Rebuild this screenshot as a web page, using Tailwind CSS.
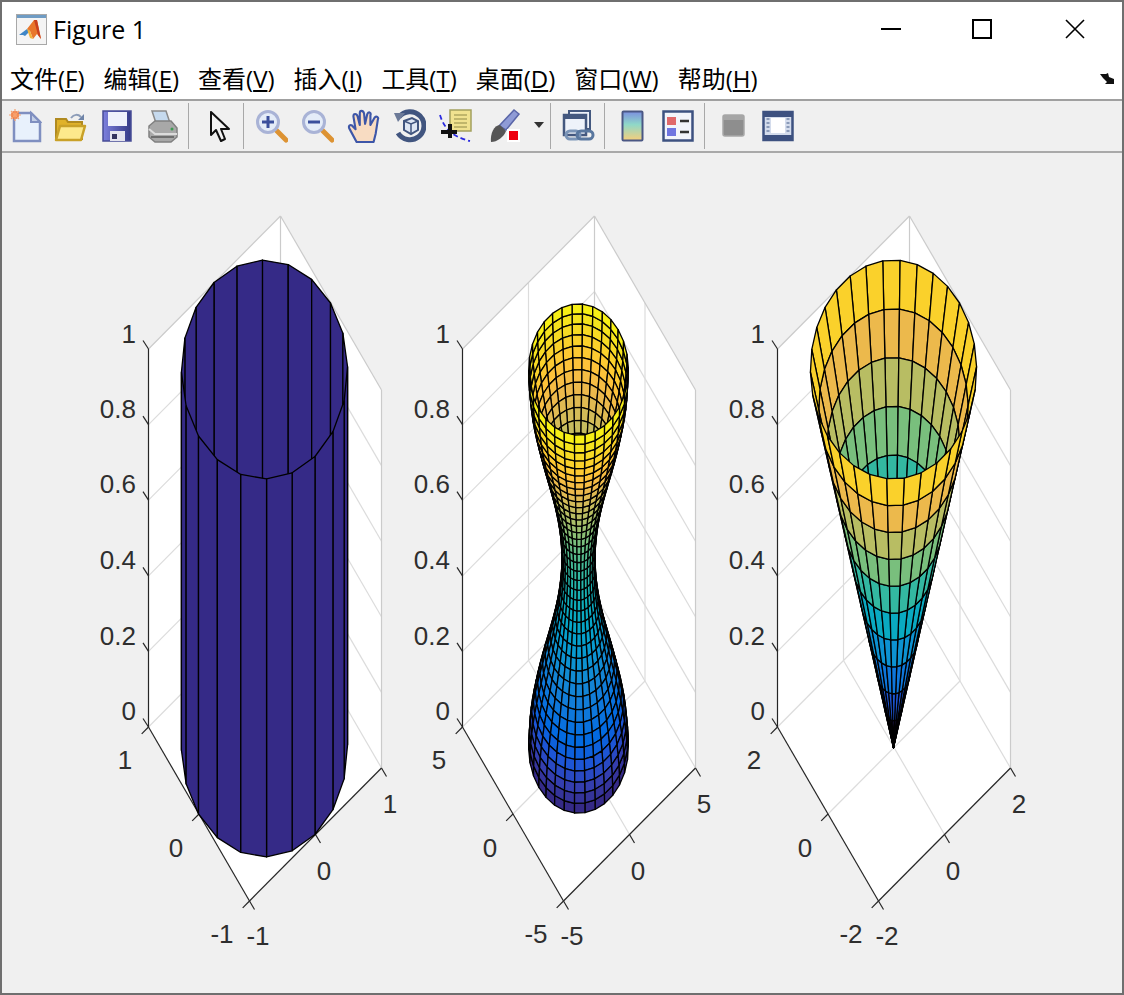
<!DOCTYPE html>
<html lang="en">

<head>
	<meta charset="UTF-8" />
	<title>Figure 1</title>
	<script src="https://cdn.jsdelivr.net/npm/@tailwindcss/browser@4"></script>
</head>

<body class="bg-[#f0f0f0] overflow-hidden">

	<div class="w-[1124px] h-[995px] flex flex-col border-2 border-[#6f6f6f] bg-[#f0f0f0] font-['Open_Sans','Noto_Sans_CJK_SC',sans-serif] text-black">

		<!-- title bar -->
		<div class="h-[56px] bg-white flex items-center shrink-0 pl-[14px] pb-[2px]">
			<svg class="w-[31px] h-[31px] shrink-0" viewBox="0 0 31 31">
				<rect x="0.5" y="0.5" width="30" height="30" fill="#f4f4f4" stroke="#a8a8a8" />
				<rect x="1" y="1" width="29" height="3" fill="#6f9cc4" />
				<polygon points="3,21 11,15 14,17 9,22 7,21" fill="#3f86c6" />
				<polygon points="11,15 18,6 21,6 25,25 21,20 17,25 14,17" fill="#e8762b" />
				<polygon points="18,6 21,6 25,25 22,21" fill="#c9401f" />
				<polygon points="11,15 14,17 17,25 14,24" fill="#f2b23c" />
			</svg>
			<span class="ml-[6px] text-[25px] leading-none">Figure 1</span>
			<div class="ml-auto flex items-center">
				<svg class="w-[20px] h-[20px] mr-[71px]" viewBox="0 0 20 20"><rect x="0" y="9" width="20" height="2" fill="#000" /></svg>
				<svg class="w-[20px] h-[20px] mr-[73px]" viewBox="0 0 20 20"><rect x="1" y="1" width="18" height="18" fill="none" stroke="#000" stroke-width="2" /></svg>
				<svg class="w-[20px] h-[20px] mr-[37px]" viewBox="0 0 20 20"><path d="M1 1L19 19M19 1L1 19" stroke="#000" stroke-width="1.6" fill="none" /></svg>
			</div>
		</div>

		<!-- menu bar -->
		<div class="h-[43px] bg-white flex items-center shrink-0 pl-[8px] gap-[19px] relative text-[24px] leading-none border-b-2 border-[#a0a0a0]">
			<span>文件(<u>F</u>)</span>
			<span>编辑(<u>E</u>)</span>
			<span>查看(<u>V</u>)</span>
			<span>插入(<u>I</u>)</span>
			<span>工具(<u>T</u>)</span>
			<span>桌面(<u>D</u>)</span>
			<span>窗口(<u>W</u>)</span>
			<span>帮助(<u>H</u>)</span>
			<svg class="absolute right-[7px] top-[15px] w-[15px] h-[12px]" viewBox="0 0 15 12">
				<path d="M0 1H6L8 0L9 4L14 6V11H5L7 9L3 5Z" fill="#111" />
			</svg>
		</div>

		<!-- toolbar -->
		<div class="h-[52px] flex items-center shrink-0 border-b-2 border-[#a9a9a9] pl-[7px] [&_svg]:blur-[0.5px]">
			<!-- new -->
			<svg class="w-[33px] h-[34px] shrink-0" viewBox="0 0 33 34">
				<path d="M5 4H22L31 13V32H5Z" fill="#e8f1fc" stroke="#7f8fc0" stroke-width="2.5" />
				<path d="M22 4V13H31Z" fill="#c4cfe6" stroke="#7f8fc0" stroke-width="2" />
				<circle cx="6" cy="6" r="4" fill="#f2763c" />
				<path d="M6 0V12M0 6H12M2 2L10 10M10 2L2 10" stroke="#f6a16e" stroke-width="1.2" />
			</svg>
			<!-- open -->
			<svg class="w-[33px] h-[34px] shrink-0 ml-[12px]" viewBox="0 0 33 34">
				<path d="M2 10H12L14 13H28V30H2Z" fill="#e0b22a" stroke="#b08a20" stroke-width="2" />
				<path d="M2 31L6 17H31L27 31Z" fill="#fde98c" stroke="#c9a128" stroke-width="2.5" stroke-linejoin="round" />
				<path d="M17 9C20 5 24 5 27 8" fill="none" stroke="#8c9cb8" stroke-width="2" />
				<path d="M30 5V11H24Z" fill="#6f84a8" />
			</svg>
			<!-- save -->
			<svg class="w-[33px] h-[34px] shrink-0 ml-[14px]" viewBox="0 0 33 34">
				<defs>
					<linearGradient id="disk" x1="0" y1="0" x2="1" y2="0">
						<stop offset="0" stop-color="#7d80de" />
						<stop offset="1" stop-color="#343a86" />
					</linearGradient>
				</defs>
				<path d="M2 2H30V32H2Z" fill="url(#disk)" stroke="#474c96" stroke-width="1.5" />
				<rect x="7" y="3" width="19" height="14" fill="#eef1fb" />
				<rect x="9" y="22" width="15" height="10" fill="#e4e4ee" />
				<rect x="11" y="25" width="5" height="5" fill="#33335e" />
			</svg>
			<!-- print -->
			<svg class="w-[33px] h-[34px] shrink-0 ml-[12px]" viewBox="0 0 33 34">
				<path d="M6 2H20L24 14H10Z" fill="#c6daee" stroke="#8a8a8a" stroke-width="1.5" />
				<path d="M3 17L9 12H25L31 19V28L25 33H9L3 28Z" fill="#a8a8a8" stroke="#808080" stroke-width="1.5" />
				<path d="M3 20L9 25H31" fill="none" stroke="#dcdcdc" stroke-width="2" />
				<circle cx="26" cy="20" r="1.5" fill="#3e9a52" />
				<path d="M5 28H28" stroke="#6e6e6e" stroke-width="2" />
			</svg>
			<div class="w-px h-[46px] bg-[#a8a8a8] ml-[9px] shrink-0"></div>
			<!-- pointer -->
			<svg class="w-[22px] h-[32px] shrink-0 ml-[20px] mt-[2px]" viewBox="0 0 22 32">
				<path d="M2 1V24L7 19L12 30L16 28L12 18H20Z" fill="#f3f3f3" stroke="#111" stroke-width="2" stroke-linejoin="round" />
			</svg>
			<div class="w-px h-[46px] bg-[#a8a8a8] ml-[12px] shrink-0"></div>
			<!-- zoom in -->
			<svg class="w-[33px] h-[34px] shrink-0 ml-[11px]" viewBox="0 0 33 34">
				<path d="M20 20L31 31" stroke="#dd9333" stroke-width="5" stroke-linecap="round" />
				<circle cx="13" cy="13" r="10.5" fill="#e4ecf8" stroke="#a9b3d6" stroke-width="3" />
				<path d="M7 13H19M13 7V19" stroke="#3a4f9c" stroke-width="3" />
			</svg>
			<!-- zoom out -->
			<svg class="w-[33px] h-[34px] shrink-0 ml-[13px]" viewBox="0 0 33 34">
				<path d="M20 20L31 31" stroke="#dd9333" stroke-width="5" stroke-linecap="round" />
				<circle cx="13" cy="13" r="10.5" fill="#e4ecf8" stroke="#a9b3d6" stroke-width="3" />
				<path d="M7 13H19" stroke="#3a4f9c" stroke-width="3" />
			</svg>
			<!-- pan -->
			<svg class="w-[33px] h-[34px] shrink-0 ml-[13px]" viewBox="1 1 29 32">
				<path d="M9 32L2 19C1 16 4 15 6 18L8 20L6 8C6 5 9 5 10 8L12 16L12 5C12 2 15 2 16 5L17 15L19 6C20 3 23 4 22 7L22 16L26 9C28 7 30 9 29 11L27 24L25 32Z" fill="#f8dcc2" stroke="#3d56a8" stroke-width="2" stroke-linejoin="round" />
			</svg>
			<!-- rotate -->
			<svg class="w-[33px] h-[34px] shrink-0 ml-[13px]" viewBox="0 0 33 34">
				<path d="M6 8A14 14 0 1 1 5 24" fill="none" stroke="#41557f" stroke-width="5" />
				<path d="M1 4L12 4L5 13Z" fill="#6c7a98" />
				<path d="M11 12L19 9L25 12V21L18 25L11 21Z" fill="#dfe7f4" stroke="#41557f" stroke-width="2" />
				<path d="M11 12L18 15L25 12M18 15V25" fill="none" stroke="#41557f" stroke-width="1.5" />
			</svg>
			<!-- data cursor -->
			<svg class="w-[33px] h-[34px] shrink-0 ml-[13px]" viewBox="0 0 33 34">
				<path d="M1 6C4 16 10 27 31 32" fill="none" stroke="#2a2ae0" stroke-width="1.8" stroke-dasharray="5 3" />
				<rect x="11" y="1" width="21" height="21" fill="#f0e28f" stroke="#a3a05e" stroke-width="1.5" />
				<path d="M15 6H28M15 10H28M15 14H28M15 18H28" stroke="#b0a860" stroke-width="1.5" />
				<path d="M11 15V29M2 23H18" stroke="#111" stroke-width="4" />
			</svg>
			<!-- brush -->
			<svg class="w-[33px] h-[34px] shrink-0 ml-[16px]" viewBox="0 0 33 34">
				<path d="M11 17L26 1L31 5L18 21Z" fill="#8f9bd6" stroke="#5a66a8" stroke-width="1.5" />
				<path d="M3 33C2 25 6 16 12 16L18 22C16 28 9 33 3 33Z" fill="#555" />
				<rect x="19" y="20" width="13" height="13" fill="#fff" />
				<rect x="21" y="22" width="9" height="9" fill="#ee0010" />
			</svg>
			<svg class="w-[10px] h-[6px] shrink-0 ml-[13px] -mt-[2px]" viewBox="0 0 10 6"><path d="M0 0H10L5 6Z" fill="#333" /></svg>
			<div class="w-px h-[46px] bg-[#a8a8a8] ml-[6px] shrink-0"></div>
			<!-- link -->
			<svg class="w-[33px] h-[34px] shrink-0 ml-[11px]" viewBox="0 0 33 34">
				<rect x="7" y="2" width="21" height="18" fill="#eef2fa" stroke="#44587f" stroke-width="2" />
				<rect x="2" y="6" width="22" height="20" fill="#eef2fa" stroke="#44587f" stroke-width="2.5" />
				<rect x="2" y="6" width="22" height="4" fill="#44587f" />
				<rect x="4" y="22" width="14" height="8" rx="4" fill="none" stroke="#7b95b8" stroke-width="3" />
				<rect x="15" y="22" width="16" height="8" rx="4" fill="none" stroke="#59779f" stroke-width="3" />
			</svg>
			<div class="w-px h-[46px] bg-[#a8a8a8] ml-[9px] shrink-0"></div>
			<!-- colorbar -->
			<svg class="w-[24px] h-[33px] shrink-0 ml-[16px]" viewBox="0 0 24 33">
				<defs>
					<linearGradient id="cbar" x1="0" y1="0" x2="0" y2="1">
						<stop offset="0" stop-color="#7c8fe0" />
						<stop offset="0.45" stop-color="#8fd8c8" />
						<stop offset="1" stop-color="#f7cf7a" />
					</linearGradient>
				</defs>
				<rect x="1.5" y="1.5" width="20" height="29" rx="1" fill="url(#cbar)" stroke="#4a5784" stroke-width="2" />
			</svg>
			<!-- legend -->
			<svg class="w-[33px] h-[33px] shrink-0 ml-[17px]" viewBox="0 0 33 33">
				<rect x="1.5" y="1.5" width="29" height="29" fill="#f2f4fa" stroke="#3d5180" stroke-width="2.5" />
				<rect x="5" y="7" width="9" height="8" fill="#e0686a" />
				<rect x="5" y="18" width="9" height="8" fill="#6f74e0" />
				<path d="M18 11H27M18 22H27" stroke="#333" stroke-width="2.5" />
			</svg>
			<div class="w-px h-[46px] bg-[#a8a8a8] ml-[9px] shrink-0"></div>
			<!-- hide tools -->
			<svg class="w-[24px] h-[24px] shrink-0 ml-[17px]" viewBox="0 0 24 24">
				<rect x="1" y="1" width="21" height="21" rx="2" fill="#8e8e8e" stroke="#a8a8a8" stroke-width="1.5" />
				<rect x="1" y="1" width="21" height="5" fill="#a6a6a6" />
			</svg>
			<!-- dock -->
			<svg class="w-[33px] h-[33px] shrink-0 ml-[16px]" viewBox="0 0 33 33">
				<rect x="1.5" y="2" width="29" height="28" fill="#d4dcec" stroke="#3d5180" stroke-width="2.5" />
				<rect x="1" y="2" width="30" height="5" fill="#3d5180" />
				<rect x="9" y="8" width="14" height="15" fill="#fff" />
				<path d="M6 8V24M26 8V24" stroke="#8a9ab8" stroke-width="3" stroke-dasharray="2 2" />
				<rect x="1" y="25" width="30" height="5" fill="#3d5180" />
			</svg>
		</div>

		<!-- figure canvas: coordinates below are window coordinates, shifted by the top offset -->
		<div class="flex-1 min-h-0 -ml-[2px]">
			<svg id="fig" class="block font-['Liberation_Sans',sans-serif]" width="1124" height="840" viewBox="0 153 1124 840"></svg>
		</div>
	</div>

	<script>
		// R2014b parula, every third entry of the 64 step map
		const PARULA = [
			[.2081, .1663, .5292], [.2081, .2386, .6771], [.1253, .3242, .8303], [.0060, .4086, .8828],
			[.0498, .4586, .8641], [.0779, .5040, .8384], [.0641, .5570, .8240], [.0265, .6137, .8135],
			[.0228, .6535, .7768], [.0590, .6838, .7254], [.1453, .7098, .6646], [.2586, .7317, .5954],
			[.3953, .7459, .5244], [.5300, .7491, .4661], [.6473, .7456, .4188], [.7525, .7384, .3768],
			[.8507, .7299, .3360], [.9450, .7261, .2886], [.9990, .7653, .2164], [.9789, .8271, .1633],
			[.9589, .8949, .1132], [.9763, .9831, .0538]
		];

		function parula(z) {
			const p = Math.min(Math.max(z, 0), 1) * (PARULA.length - 1);
			const i = Math.min(Math.floor(p), PARULA.length - 2);
			const f = p - i;
			const c = PARULA[i].map((v, k) => Math.round((v + (PARULA[i + 1][k] - v) * f) * 255));
			return `rgb(${c[0]},${c[1]},${c[2]})`;
		}

		// same oblique view for every axes, x,y normalised to -1..1 and z to 0..1
		function project(x, y, z, dx) {
			return [264.5 + dx + 66 * x - 50.5 * y, 747.5 - 66.5 * x - 87 * y - 378 * z];
		}
		const depth = (x, y, z) => -19089 * x - 24948 * y + 9100 * z;

		function line(a, b, color, w) {
			return `<line x1="${a[0]}" y1="${a[1]}" x2="${b[0]}" y2="${b[1]}" stroke="${color}" stroke-width="${w || 1.2}" />`;
		}

		function label(x, y, s) {
			return `<text x="${x}" y="${y}" text-anchor="middle" class="text-[26px] fill-[#2e2e2e]">${s}</text>`;
		}

		function axes(dx, lim) {
			// half a pixel across so vertical lines land on one column
			const P = (x, y, z) => project(x, y, z, dx + 0.5);
			const GRID = '#dcdcdc', EDGE = '#cbcbcb', AXIS = '#262626';
			let s = `<polygon fill="#fff" points="${[P(-1, 1, 1), P(1, 1, 1), P(1, -1, 1), P(1, -1, 0), P(-1, -1, 0), P(-1, 1, 0)].join(' ')}" />`;
			// floor and wall grid
			s += line(P(0, -1, 0), P(0, 1, 0), GRID) + line(P(-1, 0, 0), P(1, 0, 0), GRID);
			s += line(P(0, 1, 0), P(0, 1, 1), GRID) + line(P(1, 0, 0), P(1, 0, 1), GRID);
			for (const z of [0.2, 0.4, 0.6, 0.8]) {
				s += line(P(-1, 1, z), P(1, 1, z), GRID) + line(P(1, 1, z), P(1, -1, z), GRID);
			}
			s += line(P(-1, 1, 0), P(1, 1, 0), GRID) + line(P(1, 1, 0), P(1, -1, 0), GRID);
			s += line(P(-1, 1, 1), P(1, 1, 1), EDGE) + line(P(1, 1, 1), P(1, -1, 1), EDGE);
			s += line(P(1, 1, 0), P(1, 1, 1), EDGE) + line(P(1, -1, 0), P(1, -1, 1), EDGE);
			// axis lines and ticks
			s += line(P(-1, 1, 0), P(-1, 1, 1), AXIS) + line(P(-1, 1, 0), P(-1, -1, 0), AXIS) + line(P(-1, -1, 0), P(1, -1, 0), AXIS);
			for (const z of [0, 0.2, 0.4, 0.6, 0.8, 1]) {
				const a = P(-1, 1, z);
				s += line(a, [a[0] - 5.5, a[1] - 8.5], AXIS);
			}
			for (const t of [-1, 0, 1]) {
				const a = P(-1, t, 0), b = P(t, -1, 0);
				s += line(a, [a[0] - 6.8, a[1] + 6.8], AXIS) + line(b, [b[0] + 5, b[1] + 8.5], AXIS);
			}
			// tick labels
			[['1', 334], ['0.8', 409], ['0.6', 484], ['0.4', 560], ['0.2', 636], ['0', 711]].forEach(([t, y]) => {
				s += `<text x="${136 + dx}" y="${y + 9}" text-anchor="end" class="text-[26px] fill-[#2e2e2e]">${t}</text>`;
			});
			s += label(125 + dx, 769, lim) + label(176 + dx, 857, '0') + label(222 + dx, 943, '-' + lim);
			s += label(258 + dx, 945, '-' + lim) + label(324 + dx, 880, '0') + label(390 + dx, 813, lim);
			return s;
		}

		// surface of revolution, like cylinder(r,n): rows of quads coloured by their lower z
		function surface(dx, radius, rows, n) {
			const faces = [];
			for (let i = 0; i < rows; i++) {
				const z0 = i / rows, z1 = (i + 1) / rows;
				const r0 = radius(z0), r1 = radius(z1);
				for (let j = 0; j < n; j++) {
					const a0 = j / n * 2 * Math.PI, a1 = (j + 1) / n * 2 * Math.PI;
					const c = [[r0, a0, z0], [r0, a1, z0], [r1, a1, z1], [r1, a0, z1]].map(([r, a, z]) => [r * Math.cos(a), r * Math.sin(a), z]);
					const m = [0, 1, 2].map(k => (c[0][k] + c[1][k] + c[2][k] + c[3][k]) / 4);
					faces.push({ d: depth(m[0], m[1], m[2]), pts: c.map(p => project(p[0], p[1], p[2], dx).map(v => v.toFixed(2)).join(',')).join(' '), fill: parula(z0) });
				}
			}
			faces.sort((a, b) => a.d - b.d);
			return faces.map(f => `<polygon points="${f.pts}" fill="${f.fill}" stroke="#000" stroke-width="1.3" stroke-linejoin="round" />`).join('');
		}

		document.getElementById('fig').innerHTML =
			axes(0, '1') + surface(0, () => 1, 1, 20) +
			axes(314, '5') + surface(314, z => (2 + Math.cos(2 * Math.PI * z)) / 5, 40, 30) +
			axes(629, '2') + surface(629, z => z, 10, 30);
	</script>

</body>

</html>
